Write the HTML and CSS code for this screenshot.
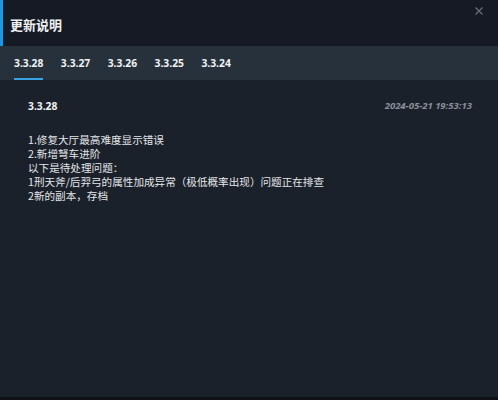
FILE: index.html
```html
<!DOCTYPE html>
<html lang="zh">
<head>
<meta charset="utf-8">
<link rel="stylesheet" href="styles.css">
</head>
<body>
<div class="dialog">
  <div class="header">
    <div class="title">更新说明</div>
    <div class="close" aria-label="close">
      <svg width="8" height="8" viewBox="0 0 8 8"><path d="M0.5 0.5L7.5 7.5M7.5 0.5L0.5 7.5" stroke="#6b7078" stroke-width="1.2"/></svg>
    </div>
  </div>
  <div class="tabs">
    <div class="tab active">3.3.28</div>
    <div class="tab">3.3.27</div>
    <div class="tab">3.3.26</div>
    <div class="tab">3.3.25</div>
    <div class="tab">3.3.24</div>
  </div>
  <div class="content">
    <div class="meta">
      <div class="version">3.3.28</div>
      <div class="date">2024-05-21 19:53:13</div>
    </div>
    <div class="notes">
      <div>1.修复大厅最高难度显示错误</div>
      <div>2.新增弩车进阶</div>
      <div>以下是待处理问题：</div>
      <div>1刑天斧/后羿弓的属性加成异常（极低概率出现）问题正在排查</div>
      <div>2新的副本，存档</div>
    </div>
  </div>
  <div class="footer"></div>
</div>
</body>
</html>
```
FILE: styles.css
```css
html, body {
  margin: 0;
  padding: 0;
  background: #1b212b;
}
body {
  width: 498px;
  height: 400px;
  overflow: hidden;
  font-family: "Noto Sans", "Noto Sans CJK SC", sans-serif;
  color: #e6e8ea;
}
.dialog {
  display: flex;
  flex-direction: column;
  width: 498px;
  height: 400px;
}
.header {
  height: 46px;
  flex: none;
  background: #161a24;
  border-left: 3px solid #1e98e0;
  display: flex;
  align-items: center;
  justify-content: space-between;
  box-sizing: border-box;
  padding: 0 15px 0 7px;
}
.title {
  font-family: "Noto Sans CJK SC", sans-serif;
  font-size: 13px;
  font-weight: 700;
  color: #eef0f2;
  margin-top: 2px;
}
.close {
  align-self: flex-start;
  margin-top: 7px;
  width: 8px;
  height: 8px;
  display: flex;
}
.tabs {
  height: 34px;
  flex: none;
  background: #27313b;
  display: flex;
  gap: 17.5px;
  padding-left: 14px;
  box-sizing: border-box;
}
.tab {
  font-size: 10.3px;
  font-weight: 700;
  color: #f0f2f4;
  display: flex;
  align-items: center;
  box-sizing: border-box;
  height: 34px;
  padding-top: 1px;
  border-bottom: 2px solid transparent;
}
.tab.active {
  border-bottom-color: #3aa2e4;
}
.content {
  flex: 1;
  padding: 19px 26px 0 28px;
  background: #1b212b;
}
.meta {
  display: flex;
  justify-content: space-between;
  align-items: center;
  height: 14px;
}
.version {
  font-size: 10.3px;
  font-weight: 700;
  color: #f0f2f4;
}
.date {
  font-size: 9.5px;
  font-weight: 700;
  font-style: italic;
  color: #8a9099;
  margin-top: -2px;
}
.notes {
  margin-top: 20px;
  font-family: "Noto Sans CJK SC", sans-serif;
  font-size: 10.6px;
  line-height: 14px;
  color: #e4e6e8;
}
.footer {
  height: 3px;
  flex: none;
  background: #0e1116;
}
```
